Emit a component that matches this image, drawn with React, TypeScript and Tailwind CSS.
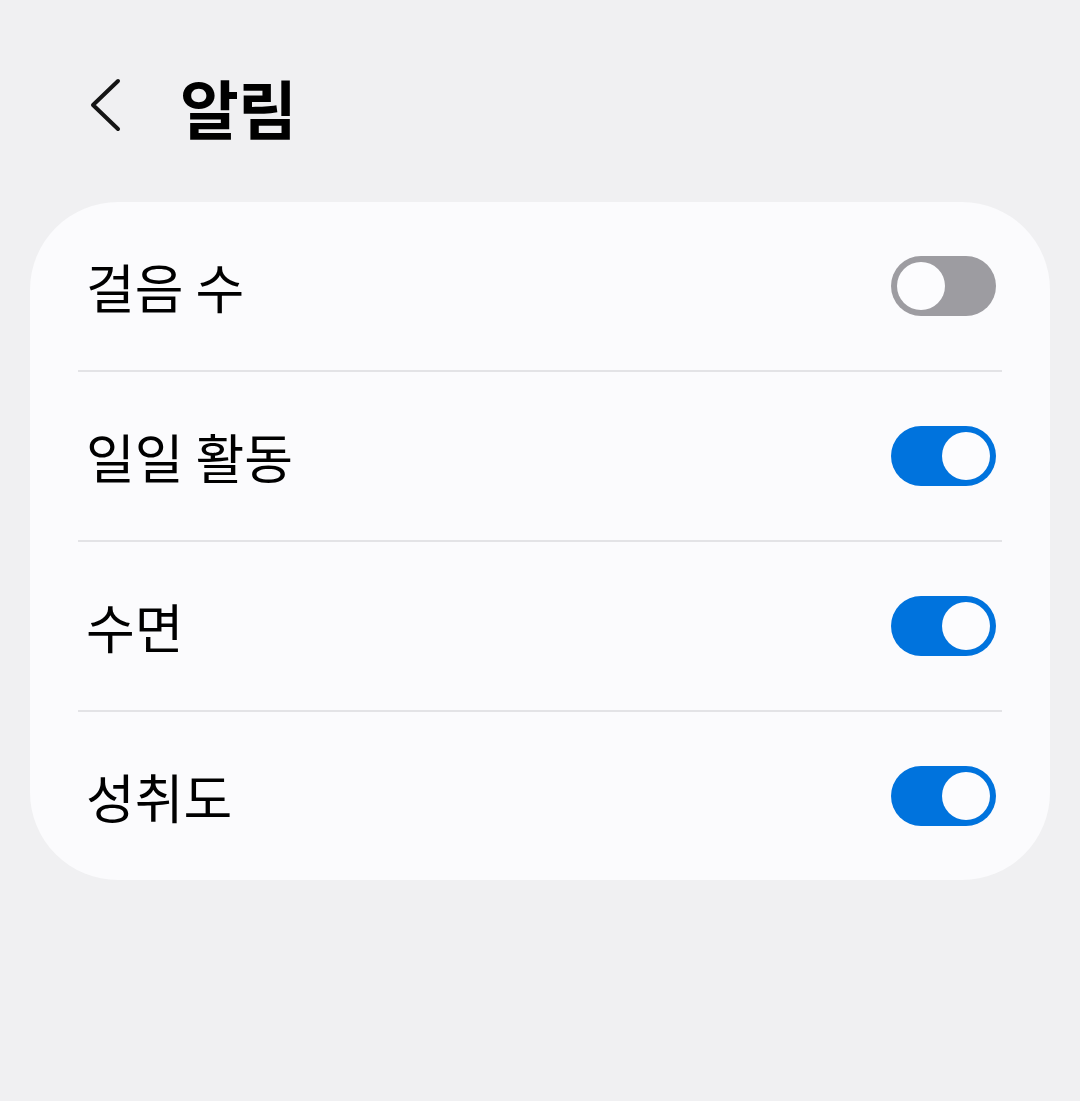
import { useState } from "react"

const FONT = "font-['Noto_Sans_CJK_KR','Noto_Sans',sans-serif]"

function Toggle({ on, onChange }: { on: boolean; onChange: () => void }) {
  return (
    <button
      type="button"
      onClick={onChange}
      className={[
        "flex h-[60px] w-[105px] shrink-0 items-center rounded-full p-[6px]",
        on ? "justify-end bg-[#0073dd]" : "justify-start bg-[#9d9ca1]",
      ].join(" ")}
    >
      <span className="block h-[48px] w-[48px] rounded-full bg-[#fcfcfe]" />
    </button>
  )
}

const rows = [
  { label: "걸음 수", on: false },
  { label: "일일 활동", on: true },
  { label: "수면", on: true },
  { label: "성취도", on: true },
]

export default function App() {
  const [state, setState] = useState(rows.map((r) => r.on))

  return (
    <div className={`min-h-[1101px] w-[1080px] bg-[#f0f0f2] px-[30px] ${FONT}`}>
      <header className="flex h-[202px] items-start pt-[66px]">
        <button type="button" className="ml-[60px] mt-[11px] flex h-[56px] w-[36px] items-center">
          <svg width="36" height="56" viewBox="0 0 36 56" fill="none">
            <polyline
              points="28,4 3,28 28,52"
              stroke="#151515"
              strokeWidth="4"
              strokeLinecap="round"
              strokeLinejoin="round"
            />
          </svg>
        </button>
        <h1 className="ml-[54px] text-[64px] leading-[80px] font-bold tracking-[-1px] text-black">알림</h1>
      </header>

      <div className="rounded-[88px] bg-[#fbfbfd] px-12">
        {rows.map((r, i) => (
          <div
            key={r.label}
            className={[
              "flex items-center justify-between pl-[8px] pr-[6px]",
              i < rows.length - 1 ? "h-[170px] border-b-2 border-[#e3e3e6]" : "h-[168px]",
            ].join(" ")}
          >
            <span className="text-[53px] leading-none text-black">{r.label}</span>
            <Toggle
              on={state[i]}
              onChange={() => setState((s) => s.map((v, j) => (j === i ? !v : v)))}
            />
          </div>
        ))}
      </div>
    </div>
  )
}
